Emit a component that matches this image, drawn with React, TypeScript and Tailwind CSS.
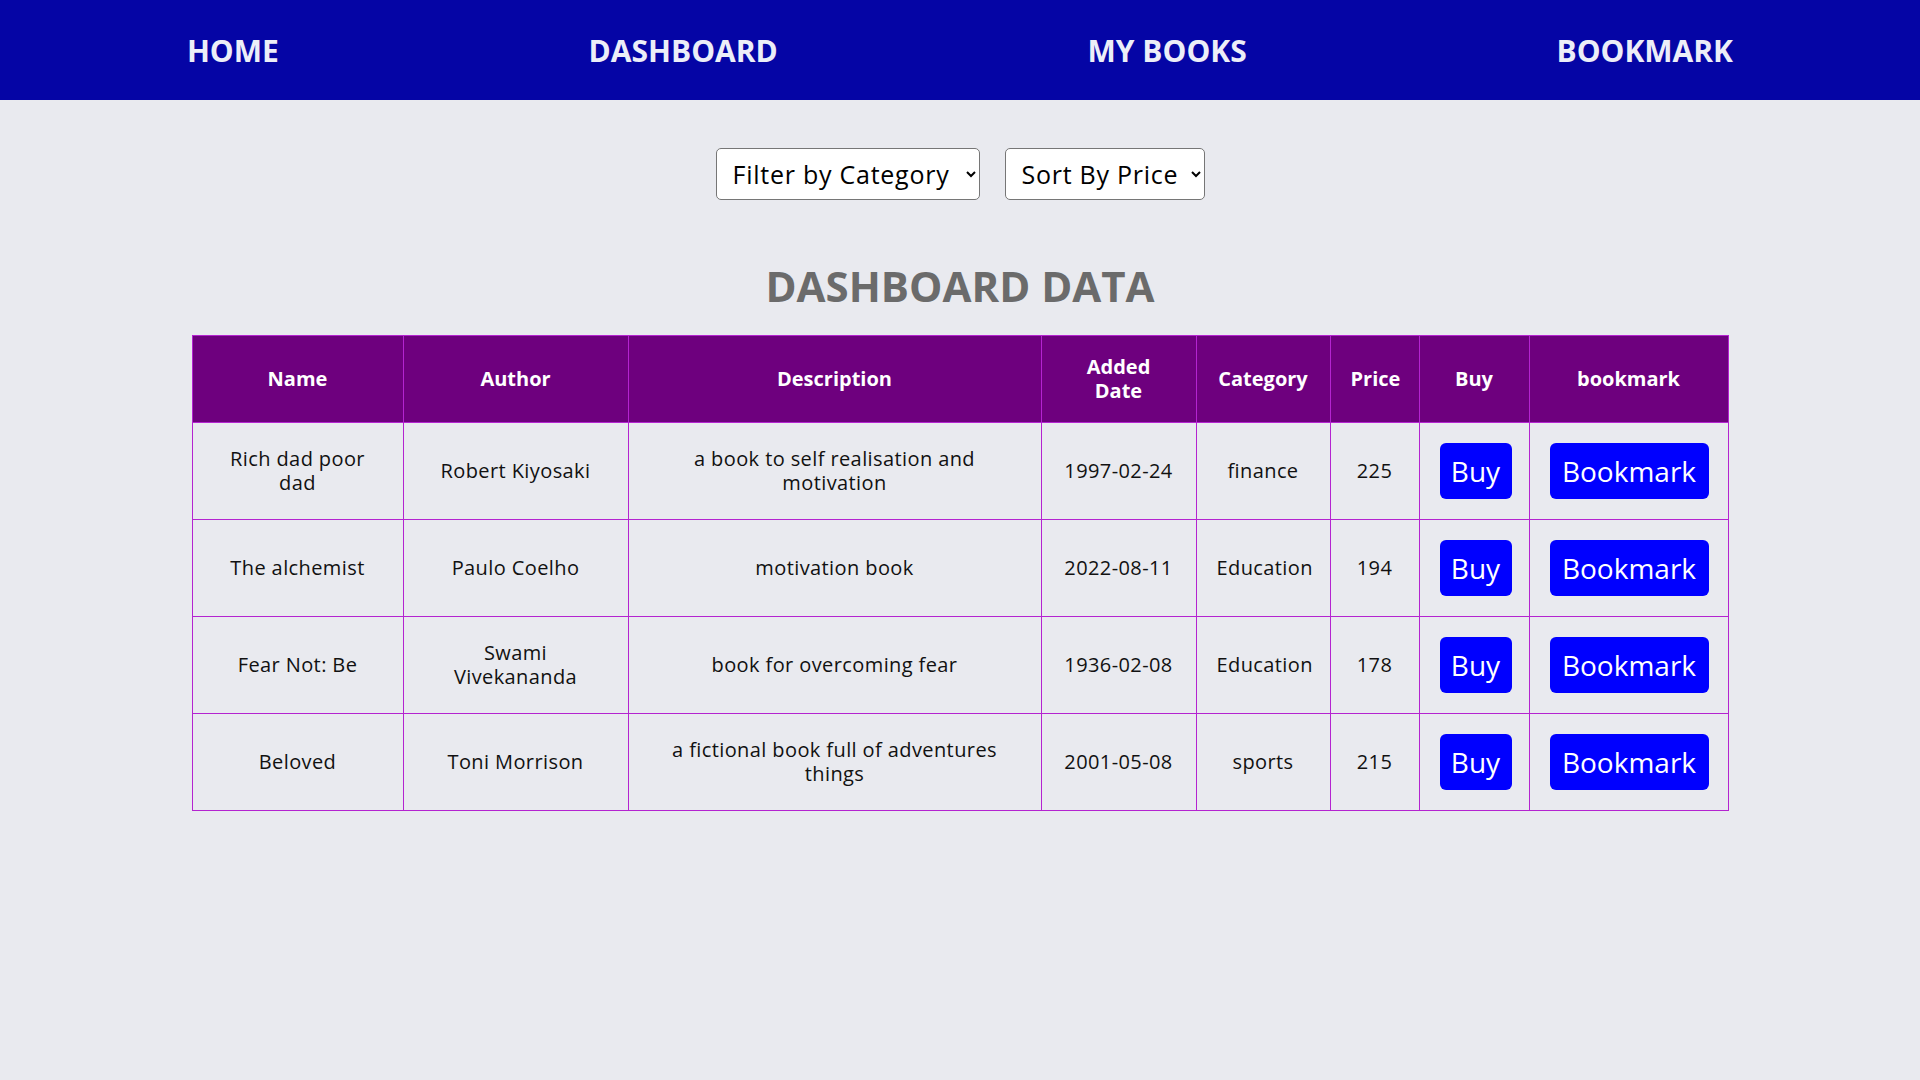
import React from "react";

type Book = {
  name: string;
  author: string;
  description: string;
  addedDate: string;
  category: string;
  price: number;
};

const books: Book[] = [
  {
    name: "Rich dad poor dad",
    author: "Robert Kiyosaki",
    description: "a book to self realisation and motivation",
    addedDate: "1997-02-24",
    category: "finance",
    price: 225,
  },
  {
    name: "The alchemist",
    author: "Paulo Coelho",
    description: "motivation book",
    addedDate: "2022-08-11",
    category: "Education",
    price: 194,
  },
  {
    name: "Fear Not: Be",
    author: "Swami Vivekananda",
    description: "book for overcoming fear",
    addedDate: "1936-02-08",
    category: "Education",
    price: 178,
  },
  {
    name: "Beloved",
    author: "Toni Morrison",
    description: "a fictional book full of adventures things",
    addedDate: "2001-05-08",
    category: "sports",
    price: 215,
  },
];

const columns = [
  { label: "Name", width: "w-[211px]" },
  { label: "Author", width: "w-[225px]" },
  { label: "Description", width: "w-[413px]" },
  { label: "Added Date", width: "w-[155px]" },
  { label: "Category", width: "w-[134px]" },
  { label: "Price", width: "w-[89px]" },
  { label: "Buy", width: "w-[110px]" },
  { label: "bookmark", width: "w-[199px]" },
];

const navLinks = ["HOME", "DASHBOARD", "MY BOOKS", "BOOKMARK"];

const Navbar = () => (
  <nav className="flex h-[100px] items-center justify-around bg-[#0505a5] px-8">
    {navLinks.map((link) => (
      <a
        key={link}
        href="#"
        className="text-[30px] font-bold text-[#eceef8]"
      >
        {link}
      </a>
    ))}
  </nav>
);

const cell = "border border-[#b424d0] px-5 text-center align-middle";

const App = () => {
  return (
    <div
      className="min-h-screen w-full bg-[#e9eaef]"
      style={{ fontFamily: '"Open Sans", "Noto Sans", sans-serif' }}
    >
      <Navbar />

      <main className="flex flex-col items-center pt-12">
        {/* Filters */}
        <div className="flex items-center justify-center gap-[25px]">
          <select className="h-[52px] w-[264px] rounded-[5px] border border-[#767676] bg-white pl-3 pr-1 text-[25px] tracking-[0.03em] text-black">
            <option>Filter by Category</option>
            <option>finance</option>
            <option>Education</option>
            <option>sports</option>
          </select>
          <select className="h-[52px] w-[200px] rounded-[5px] border border-[#767676] bg-white pl-3 pr-1 text-[25px] tracking-[0.03em] text-black">
            <option>Sort By Price</option>
            <option>Low to High</option>
            <option>High to Low</option>
          </select>
        </div>

        <h2 className="mt-[62px] text-[42px] font-bold leading-[48px] text-[#6b6b6b]">
          DASHBOARD DATA
        </h2>

        {/* Table */}
        <table className="mt-[25px] w-[1536px] table-fixed border-collapse text-[20px] leading-[24px] text-[#111]">
          <thead>
            <tr className="bg-[#6e007e] text-white">
              {columns.map((col) => (
                <th
                  key={col.label}
                  className={`${cell} ${col.width} py-[19px] font-bold`}
                >
                  {col.label}
                </th>
              ))}
            </tr>
          </thead>
          <tbody className="tracking-[0.02em]">
            {books.map((book) => (
              <tr key={book.name}>
                <td className={`${cell} py-5`}>{book.name}</td>
                <td className={`${cell} py-5`}>{book.author}</td>
                <td className={`${cell} py-5`}>{book.description}</td>
                <td className={`${cell} py-5`}>{book.addedDate}</td>
                <td className={`${cell} py-5`}>{book.category}</td>
                <td className={`${cell} py-5`}>{book.price}</td>
                <td className={`${cell} py-5`}>
                  <button className="h-[56px] w-[72px] rounded-[6px] bg-[#0000ff] text-[28px] tracking-normal text-white">
                    Buy
                  </button>
                </td>
                <td className={`${cell} py-5`}>
                  <button className="h-[56px] w-[159px] rounded-[6px] bg-[#0000ff] text-[28px] tracking-normal text-white">
                    Bookmark
                  </button>
                </td>
              </tr>
            ))}
          </tbody>
        </table>
      </main>
    </div>
  );
};

export default App;
